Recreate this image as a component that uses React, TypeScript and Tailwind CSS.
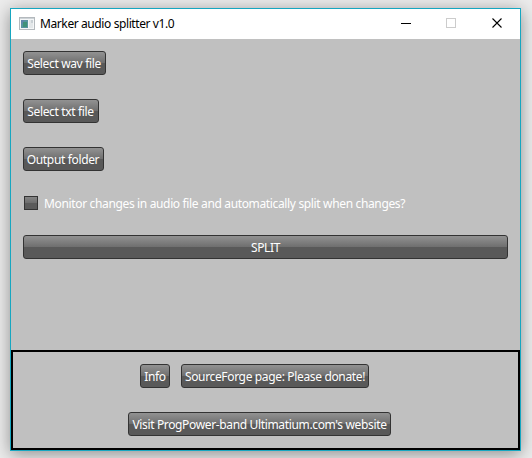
import type { ReactNode } from "react";

function WpfButton({ children, className = "" }: { children: ReactNode; className?: string }) {
  return (
    <button
      type="button"
      className={`flex h-6 shrink-0 items-center justify-center rounded-[3px] border border-[#333333] bg-[linear-gradient(to_bottom,#929292_0%,#707070_48%,#595959_52%,#595959_100%)] pt-px text-[12px] leading-4 tracking-[-0.35px] whitespace-nowrap text-white ${className}`}
    >
      {children}
    </button>
  );
}

function TitleBar() {
  return (
    <header className="flex h-[30px] items-center bg-white pl-2 text-black">
      <svg width="16" height="14" viewBox="0 0 16 14" className="-mt-px shrink-0" shapeRendering="crispEdges">
        <rect x="0.5" y="0.5" width="15" height="12" fill="#f4f6f7" stroke="#b4b9bd" />
        <rect x="1" y="1" width="14" height="1" fill="#cdd3d7" />
        <rect x="2" y="3" width="7" height="8" fill="#5794a0" />
        <rect x="2" y="3" width="3" height="4" fill="#5f86aa" />
        <rect x="4" y="5" width="4" height="5" fill="#3f9278" />
        <rect x="10" y="3" width="4" height="8" fill="#e3e7e9" />
        <rect x="12" y="3" width="2" height="3" fill="#c9d0d4" />
      </svg>
      <h1 className="ml-[5px] text-[12px] leading-4 tracking-[-0.4px] whitespace-nowrap">Marker audio splitter v1.0</h1>
      <div className="ml-auto flex h-full">
        <svg width="46" height="30" viewBox="0 0 46 30" stroke="#000" shapeRendering="crispEdges">
          <path d="M19 14.5h10" />
        </svg>
        <svg width="46" height="30" viewBox="0 0 46 30" fill="none" stroke="#cccccc" shapeRendering="crispEdges">
          <rect x="18.5" y="9.5" width="9" height="9" />
        </svg>
        <svg width="46" height="30" viewBox="0 0 46 30" stroke="#000" strokeWidth="1.1">
          <path d="M18.5 9.5l9 9M27.5 9.5l-9 9" />
        </svg>
      </div>
    </header>
  );
}

export default function App() {
  return (
    <div className="h-[458px] w-[532px] overflow-hidden bg-[#ececec] pt-2 pl-[10px] font-['Noto_Sans','Open_Sans',sans-serif]">
      <main className="flex h-[443px] w-[511px] flex-col border border-[#16a6c0] bg-[#c0c0c0] shadow-[0_3px_16px_rgba(0,0,0,0.4)]">
        <TitleBar />
        <section className="flex h-[311px] flex-col items-start pt-3 pr-3 pl-3">
          <WpfButton className="w-[83px] pr-px">Select wav file</WpfButton>
          <WpfButton className="mt-6 w-[76px] pr-px">Select txt file</WpfButton>
          <WpfButton className="mt-6 w-[81px] pr-px">Output folder</WpfButton>
          <label className="mt-6 ml-px flex h-4 items-center text-white">
            <span className="size-[14px] border border-[#333333] bg-[linear-gradient(to_bottom,#858585_0%,#6e6e6e_48%,#5b5b5b_52%,#5b5b5b_100%)]" />
            <span className="mt-[2px] ml-[6px] text-[12px] leading-4 tracking-[-0.35px] whitespace-nowrap">
              Monitor changes in audio file and automatically split when changes?
            </span>
          </label>
          <WpfButton className="mt-6 w-[485px]">SPLIT</WpfButton>
        </section>
        <footer className="flex h-[100px] flex-col items-center border-2 border-black pt-3">
          <div className="flex gap-[11px]">
            <WpfButton className="w-[30px]">Info</WpfButton>
            <WpfButton className="mr-[22px] w-[188px]">SourceForge page: Please donate!</WpfButton>
          </div>
          <WpfButton className="mt-6 mr-3 w-[263px]">Visit ProgPower-band Ultimatium.com's website</WpfButton>
        </footer>
      </main>
    </div>
  );
}
